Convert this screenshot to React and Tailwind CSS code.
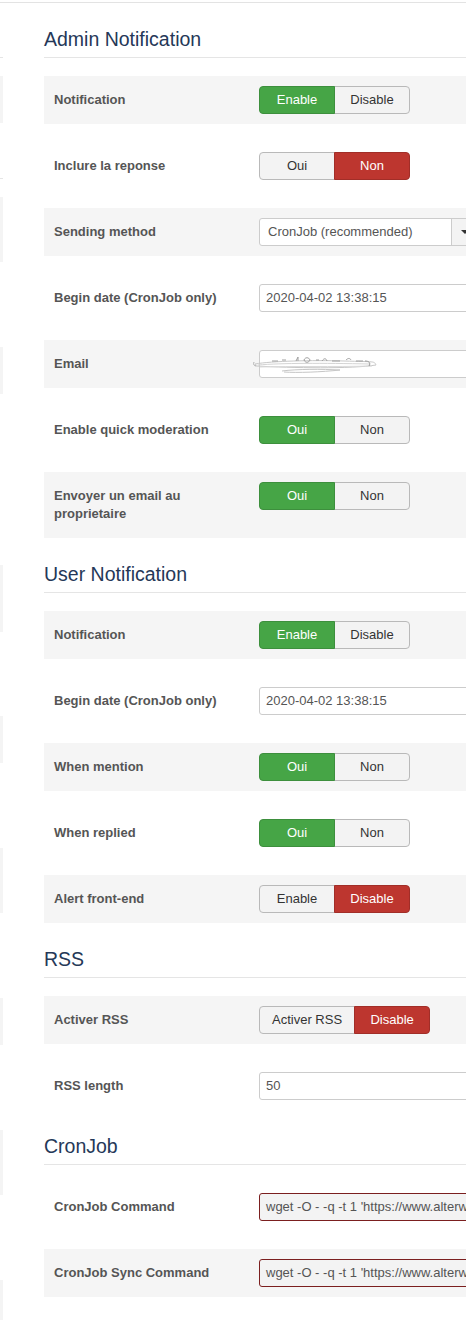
import React from "react";

const FONT = { fontFamily: '"Liberation Sans", Arial, Helvetica, sans-serif' };

function Legend({ children }) {
  return (
    <div className="text-[19.5px] leading-[36px] text-[#253858] border-b border-[#e5e5e5] mb-[18px] whitespace-nowrap">
      {children}
    </div>
  );
}

function Row({ label, gray, children }) {
  return (
    <div className={`flex items-start pl-[10px] py-[10px] ${gray ? "bg-[#f5f5f5]" : ""} mb-[18px]`}>
      <div className="w-[205px] shrink-0 pr-[25px] text-[13px] font-bold leading-[18px] py-[5px] text-[#555]">
        {label}
      </div>
      <div className="flex-1 min-w-0 relative">{children}</div>
    </div>
  );
}

function Toggle({ options, active, color }) {
  return (
    <div className="flex">
      {options.map((o, i) => {
        const isActive = i === active;
        const base =
          "h-[28px] min-w-[76px] px-[12px] text-[13px] leading-[18px] border flex items-center justify-center whitespace-nowrap";
        const round = i === 0 ? "rounded-l-[4px]" : "rounded-r-[4px] -ml-px";
        let c = "bg-[#f3f3f3] border-[#b9b9b9] text-[#333]";
        if (isActive && color === "green") c = "bg-[#46a546] border-[#3d8f3d] text-white relative";
        if (isActive && color === "red") c = "bg-[#bd362f] border-[#a12e28] text-white relative";
        return (
          <div key={o} className={`${base} ${round} ${c}`}>
            {o}
          </div>
        );
      })}
    </div>
  );
}

function TextInput({ value, cron }) {
  return (
    <div
      className={`h-[28px] w-[280px] border rounded-[3px] px-[6px] text-[13px] leading-[26px] text-[#555] whitespace-nowrap overflow-hidden ${
        cron ? "border-[#7b1f1f] bg-[#f3f3f3]" : "border-[#cccccc] bg-white"
      }`}
    >
      {value}
    </div>
  );
}

function SelectBox() {
  return (
    <div className="flex h-[28px] w-[280px] border border-[#cccccc] rounded-[3px] bg-white overflow-hidden">
      <div className="w-[191px] shrink-0 pl-[8px] text-[13px] leading-[26px] text-[#555] whitespace-nowrap">
        CronJob (recommended)
      </div>
      <div className="w-[30px] shrink-0 bg-[#f3f3f3] border-l border-[#cccccc] flex items-center pl-[9px]">
        <div className="w-0 h-0 border-l-[4px] border-r-[4px] border-t-[4px] border-l-transparent border-r-transparent border-t-[#333]" />
      </div>
    </div>
  );
}

function Scribble() {
  return (
    <svg
      className="absolute left-[-7px] top-[2px]"
      width="128"
      height="24"
      viewBox="0 0 128 24"
      fill="none"
    >
      <path d="M3 12 C 20 9, 60 8, 92 9 S 122 9, 124 13 C 100 17, 40 16, 4 14 Z" stroke="#c8c8c8" strokeWidth="1" />
      <path d="M6 13 C 30 11, 70 11, 118 12" stroke="#d4d4d4" strokeWidth="1" />
      <path d="M8 15 C 40 14, 80 15, 120 14" stroke="#dadada" strokeWidth="1" />
      <path d="M20 9 h6 M30 8 h4 M44 9 l2 -4 v4 M52 8 c1 -3 5 -3 6 0 c-1 3 -5 3 -6 0 M64 8 h3 M70 9 c2 -3 4 -3 5 0 M80 9 h8 M94 8 c2 -2 4 -2 5 0 M104 9 h7" stroke="#9f9f9f" strokeWidth="1" />
      <path d="M30 19 C 45 17, 70 17, 88 18 C 70 20, 45 21, 32 20" stroke="#c6c6c6" strokeWidth="1" />
      <path d="M113 9 c4 0 6 2 4 5" stroke="#9a9a9a" strokeWidth="1" />
      <path d="M2 10 c-1 2 0 4 2 4" stroke="#b0b0b0" strokeWidth="1" />
    </svg>
  );
}

function LeftStrip() {
  const items = [
    { mt: "mt-[54px]", h: "h-px", c: "bg-[#e5e5e5]" },
    { mt: "mt-[18px]", h: "h-[47px]", c: "bg-[#f4f4f4]" },
    { mt: "mt-[55px]", h: "h-px", c: "bg-[#e5e5e5]" },
    { mt: "mt-[18px]", h: "h-[65px]", c: "bg-[#f4f4f4]" },
    { mt: "mt-[85px]", h: "h-[47px]", c: "bg-[#f4f4f4]" },
    { mt: "mt-[171px]", h: "h-[67px]", c: "bg-[#f4f4f4]" },
    { mt: "mt-[84px]", h: "h-[47px]", c: "bg-[#f4f4f4]" },
    { mt: "mt-[85px]", h: "h-[65px]", c: "bg-[#f4f4f4]" },
    { mt: "mt-[85px]", h: "h-[47px]", c: "bg-[#f4f4f4]" },
    { mt: "mt-[85px]", h: "h-[65px]", c: "bg-[#f4f4f4]" },
    { mt: "mt-[85px]", h: "h-[40px]", c: "bg-[#f4f4f4]" },
  ];
  return (
    <div className="w-[3px] shrink-0 flex flex-col">
      {items.map((it, i) => (
        <div key={i} className={`${it.mt} ${it.h} ${it.c} w-full`} />
      ))}
    </div>
  );
}

export default function App() {
  return (
    <div className="w-[466px] h-[1320px] overflow-hidden bg-white" style={FONT}>
      <div className="mt-[2px] h-px bg-[#e3e3e3]" />
      <div className="flex">
        <LeftStrip />
        <div className="flex-1 min-w-0 pl-[41px] pt-[18px] overflow-hidden">
          <Legend>Admin Notification</Legend>
          <Row label="Notification" gray>
            <Toggle options={["Enable", "Disable"]} active={0} color="green" />
          </Row>
          <Row label="Inclure la reponse">
            <Toggle options={["Oui", "Non"]} active={1} color="red" />
          </Row>
          <Row label="Sending method" gray>
            <SelectBox />
          </Row>
          <Row label="Begin date (CronJob only)">
            <TextInput value="2020-04-02 13:38:15" />
          </Row>
          <Row label="Email" gray>
            <TextInput value="" />
            <Scribble />
          </Row>
          <Row label="Enable quick moderation">
            <Toggle options={["Oui", "Non"]} active={0} color="green" />
          </Row>
          <Row label="Envoyer un email au proprietaire" gray>
            <Toggle options={["Oui", "Non"]} active={0} color="green" />
          </Row>

          <Legend>User Notification</Legend>
          <Row label="Notification" gray>
            <Toggle options={["Enable", "Disable"]} active={0} color="green" />
          </Row>
          <Row label="Begin date (CronJob only)">
            <TextInput value="2020-04-02 13:38:15" />
          </Row>
          <Row label="When mention" gray>
            <Toggle options={["Oui", "Non"]} active={0} color="green" />
          </Row>
          <Row label="When replied">
            <Toggle options={["Oui", "Non"]} active={0} color="green" />
          </Row>
          <Row label="Alert front-end" gray>
            <Toggle options={["Enable", "Disable"]} active={1} color="red" />
          </Row>

          <Legend>RSS</Legend>
          <Row label="Activer RSS" gray>
            <Toggle options={["Activer RSS", "Disable"]} active={1} color="red" />
          </Row>
          <Row label="RSS length">
            <TextInput value="50" />
          </Row>

          <Legend>CronJob</Legend>
          <Row label="CronJob Command">
            <TextInput cron value="wget -O - -q -t 1 'https://www.alterweb.fr/index.php?option=com_kunena'" />
          </Row>
          <Row label="CronJob Sync Command" gray>
            <TextInput cron value="wget -O - -q -t 1 'https://www.alterweb.fr/index.php?option=com_kunena'" />
          </Row>
        </div>
      </div>
    </div>
  );
}
